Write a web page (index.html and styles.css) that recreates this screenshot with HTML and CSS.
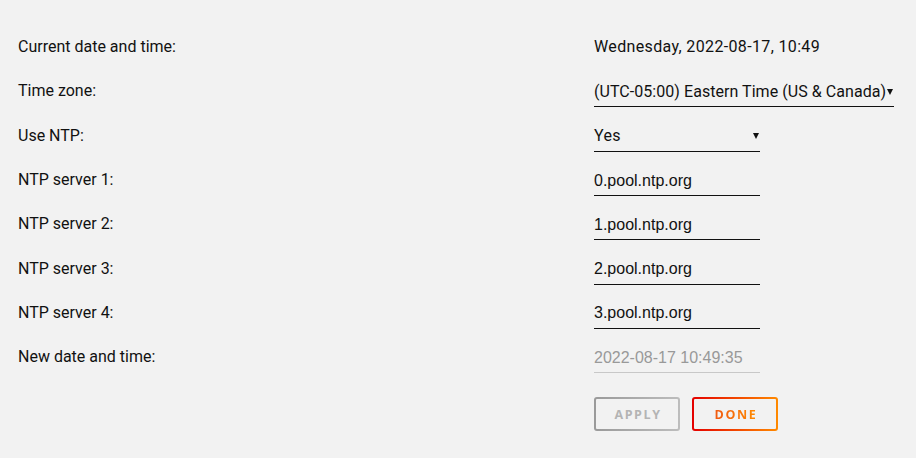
FILE: index.html
```html
<!DOCTYPE html>
<html lang="en">
<head>
    <meta charset="UTF-8">
    <title>Date and time</title>
    <link rel="stylesheet" href="styles.css">
</head>
<body>

<div id="settings">
    <div class="row">
        <div class="label">Current date and time:</div>
        <div class="value">Wednesday, 2022-08-17, 10:49</div>
    </div>
    <div class="row">
        <div class="label">Time zone:</div>
        <div class="select wide"><span class="text">(UTC-05:00) Eastern Time (US &amp; Canada)</span><span class="caret"></span></div>
    </div>
    <div class="row">
        <div class="label">Use NTP:</div>
        <div class="select"><span class="text">Yes</span><span class="caret"></span></div>
    </div>
    <div class="row">
        <div class="label">NTP server 1:</div>
        <input class="field" type="text" value="0.pool.ntp.org">
    </div>
    <div class="row">
        <div class="label">NTP server 2:</div>
        <input class="field" type="text" value="1.pool.ntp.org">
    </div>
    <div class="row">
        <div class="label">NTP server 3:</div>
        <input class="field" type="text" value="2.pool.ntp.org">
    </div>
    <div class="row">
        <div class="label">NTP server 4:</div>
        <input class="field" type="text" value="3.pool.ntp.org">
    </div>
    <div class="row">
        <div class="label">New date and time:</div>
        <input class="field disabled" type="text" placeholder="2022-08-17 10:49:35" disabled>
    </div>
    <div class="buttons">
        <button class="btn apply" disabled><span>APPLY</span></button>
        <button class="btn done"><span>DONE</span></button>
    </div>
</div>

</body>
</html>
```

FILE: styles.css
```css
body {
    margin: 0;
    background-color: #f2f2f2;
    font-family: Roboto, "Liberation Sans", sans-serif;
    font-size: 16px;
    color: #111;
}
#settings {
    padding: 25px 0 0 18px;
}
.row {
    display: grid;
    grid-template-columns: 576px auto;
    align-items: center;
    height: 44.3px;
}
.label {
    line-height: 20px;
}
.value {
    line-height: 20px;
    letter-spacing: 0.35px;
}
.select {
    display: flex;
    align-items: center;
    justify-content: space-between;
    width: 166px;
    height: 32px;
    padding-top: 1px;
    box-sizing: border-box;
    border-bottom: 1px solid #111;
    letter-spacing: 0.35px;
    white-space: nowrap;
}
.select.wide {
    width: 300px;
    letter-spacing: 0.05px;
}
.select .text {
    flex: 1;
    min-width: 0;
}
.caret {
    flex-shrink: 0;
    width: 0;
    height: 0;
    margin-right: 1px;
    margin-top: 1px;
    border-left: 3px solid transparent;
    border-right: 3px solid transparent;
    border-top: 6px solid #111;
}
.field {
    width: 166px;
    height: 32px;
    box-sizing: border-box;
    padding: 2px 0 0 0;
    border: none;
    border-bottom: 1px solid #111;
    background: transparent;
    font-family: "Liberation Sans", Arial, sans-serif;
    font-size: 16px;
    color: #111;
    outline: none;
}
.field.disabled {
    border-bottom-color: #c8c8c8;
}
.field::placeholder {
    color: #999;
}
.buttons {
    display: flex;
    gap: 12px;
    margin: 18px 0 0 576px;
}
.btn {
    width: 86px;
    height: 34px;
    border: 2px solid transparent;
    border-radius: 3px;
    font-family: "Open Sans", "Noto Sans", sans-serif;
    font-size: 12.5px;
    font-weight: 700;
    letter-spacing: 1.6px;
    padding: 0 0 0 2px;
}
.btn.apply {
    background: linear-gradient(#f2f2f2, #f2f2f2) padding-box,
                linear-gradient(90deg, #9a9a9a, #bdbdbd) border-box;
    color: #b4b4b4;
}
.btn.done {
    background: linear-gradient(#f2f2f2, #f2f2f2) padding-box,
                linear-gradient(90deg, #e40000, #ff8a00) border-box;
    cursor: pointer;
}
.btn.done span {
    background: linear-gradient(90deg, #f05a10, #ff8a00);
    -webkit-background-clip: text;
    background-clip: text;
    color: transparent;
}
```
